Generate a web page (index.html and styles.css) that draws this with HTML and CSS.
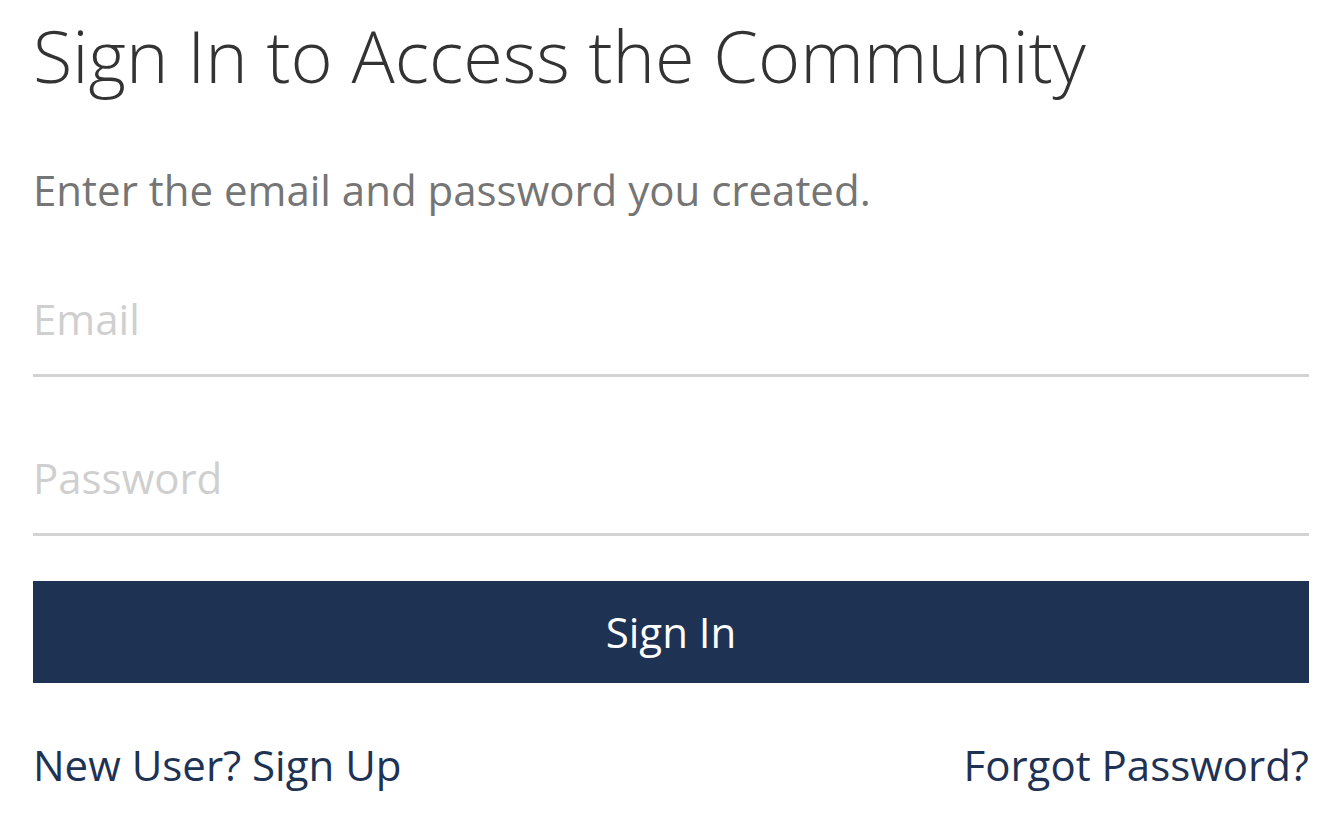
FILE: index.html
```html
<!DOCTYPE html>
<html lang="en">
<head>
    <meta charset="UTF-8">
    <meta name="viewport" content="width=device-width, initial-scale=1.0">
    <title>Sign In</title>
    <link rel="stylesheet" href="styles.css">
</head>
<body>
    <div class="signin">
        <h1 class="title">Sign In to Access the Community</h1>
        <p class="lead">Enter the email and password you created.</p>
        <form class="signin-form">
            <input type="email" class="field" placeholder="Email">
            <input type="password" class="field" placeholder="Password">
            <button type="submit" class="submit">Sign In</button>
        </form>
        <div class="links">
            <a href="#signup">New User? Sign Up</a>
            <a href="#forgot">Forgot Password?</a>
        </div>
    </div>
</body>
</html>
```

FILE: styles.css
```css
body {
    font-family: "Open Sans", Arial, sans-serif;
    margin: 0;
    padding: 0;
    background: #fff;
}
.signin {
    padding: 12px 31px 0 33px;
}
.title {
    font-size: 72px;
    font-weight: 300;
    color: #333;
    margin: 0;
    line-height: 86px;
}
.lead {
    font-size: 42px;
    color: #757575;
    margin: 63px 0 0;
    line-height: 58px;
}
.signin-form {
    margin-top: 44px;
}
.field {
    display: block;
    width: 100%;
    box-sizing: border-box;
    border: none;
    border-bottom: 3px solid #d3d3d3;
    font-family: inherit;
    font-size: 42px;
    line-height: 58px;
    height: 114px;
    padding: 26px 0 27px;
    margin: 0 0 45px;
    color: #333;
    outline: none;
}
.field::placeholder {
    color: #cfcfcf;
}
.submit {
    display: block;
    width: 100%;
    height: 102px;
    box-sizing: border-box;
    padding: 0;
    border: none;
    background-color: #1e3254;
    color: #fff;
    font-family: inherit;
    font-size: 42px;
    line-height: 58px;
}
.links {
    display: flex;
    justify-content: space-between;
    margin-top: 53px;
    line-height: 58px;
}
.links a {
    color: #1e3254;
    text-decoration: none;
    font-size: 42px;
}
```
